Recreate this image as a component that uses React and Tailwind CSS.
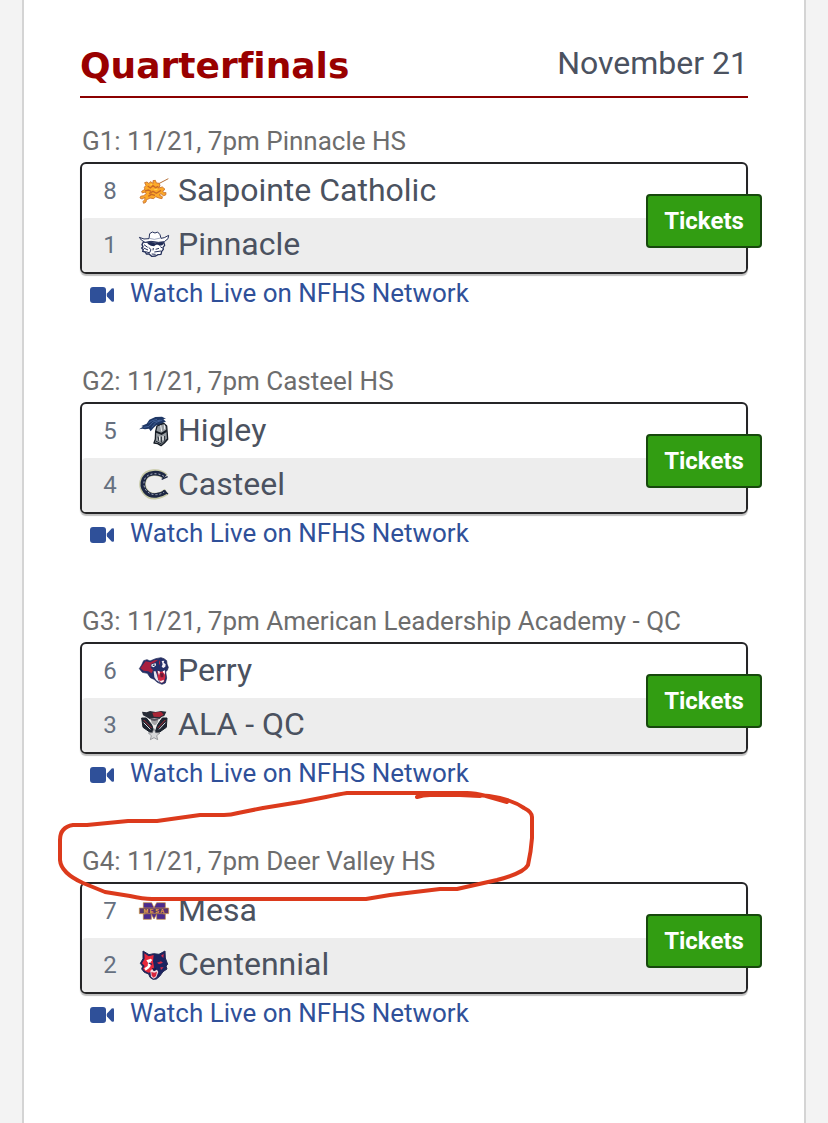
import React from "react";

const games = [
  {
    id: "G1",
    info: "11/21, 7pm Pinnacle HS",
    teams: [
      { seed: 8, name: "Salpointe Catholic", Logo: LancerLogo },
      { seed: 1, name: "Pinnacle", Logo: PioneerLogo },
    ],
  },
  {
    id: "G2",
    info: "11/21, 7pm Casteel HS",
    teams: [
      { seed: 5, name: "Higley", Logo: KnightLogo },
      { seed: 4, name: "Casteel", Logo: HorseshoeLogo },
    ],
  },
  {
    id: "G3",
    info: "11/21, 7pm American Leadership Academy - QC",
    teams: [
      { seed: 6, name: "Perry", Logo: PumaLogo },
      { seed: 3, name: "ALA - QC", Logo: PatriotLogo },
    ],
  },
  {
    id: "G4",
    info: "11/21, 7pm Deer Valley HS",
    circled: true,
    teams: [
      { seed: 7, name: "Mesa", Logo: MesaLogo },
      { seed: 2, name: "Centennial", Logo: CoyoteLogo },
    ],
  },
];

// All team logos share the same 96 unit canvas
function LogoFrame({ children }) {
  return (
    <svg viewBox="-3 -3 96 96" className="w-8 h-8 shrink-0" aria-hidden="true">
      {children}
    </svg>
  );
}

function LancerLogo() {
  return (
    <LogoFrame>
      <path d="M50 28L88 8" stroke="#b5713a" strokeWidth="3" />
      <path
        d="M21 28L17 20L24 18L30 23L34 17L43 22L42 14L49 13L52 21L61 22L63 30L57 36L70 33L78 40L71 45L74 50L81 50L80 57L73 59L66 53L60 57L70 62L69 68L60 66L50 62L44 68L33 66L26 70L22 71L21 78L14 82L12 77L17 71L18 64L9 69L3 66L5 61L14 59L22 53L18 48L10 51L8 46L18 40L16 34Z"
        fill="#fda928"
        stroke="#cf7a35"
        strokeWidth="3"
        strokeLinejoin="round"
      />
      <path d="M18 45L28 42L36 46M26 30L34 36L42 29L50 35L58 31M30 53L42 46L52 52L66 43M28 61L37 55L48 58" fill="none" stroke="#c96a25" strokeWidth="4" />
      <path d="M34 27L39 25M46 41L55 40" stroke="#ffd04a" strokeWidth="4" />
    </LogoFrame>
  );
}

function PioneerLogo() {
  return (
    <LogoFrame>
      <path d="M13 36L9 44L12 50L8 54L13 59L11 64L19 66L22 72L30 72L38 79L50 78L57 74L66 73L68 64L73 58L72 52L77 46L74 36Z" fill="#fff" stroke="#25305a" strokeWidth="4" strokeLinejoin="round" />
      <path d="M24 38L36 36L48 40L66 36L75 39L70 46L62 47L57 44L51 44L45 49L36 47L28 43Z" fill="#1f2b55" />
      <path d="M15 44L26 52M14 54L27 60M20 65L33 69M29 52L36 59L32 68M38 72L50 73M46 66L66 63M50 58L60 55M64 50L70 54M43 54L42 61" fill="none" stroke="#25305a" strokeWidth="3" />
      <path d="M1 22L15 27L30 26L32 11L40 6L48 9L56 6L63 14L66 25L76 23L89 16L87 26L76 35L58 37L36 34L18 37L7 30Z" fill="#fff" stroke="#25305a" strokeWidth="3" strokeLinejoin="round" />
      <path d="M31 25L46 28L65 24" fill="none" stroke="#7480a0" strokeWidth="2" />
    </LogoFrame>
  );
}

function KnightLogo() {
  return (
    <LogoFrame>
      <path d="M0 40l12-8-5-2 16-7 8-12 18-8 20-1 12 6-8 1 8 9-7 1-4 9-18 0-8 7-9 11-5-8-12 2-8-2z" fill="#1e3765" />
      <path d="M14 34l16-3 12-13 22-6M38 34l12-14 20-8M28 21l12-7 14-4" fill="none" stroke="#5576b0" strokeWidth="2" />
      <path d="M54 30L74 22L83 30L86 70L76 81L66 89L56 83L45 81L49 70L50 46Z" fill="#969ca1" stroke="#171d26" strokeWidth="4" strokeLinejoin="round" />
      <path d="M51 44L67 50L84 40L83 48L68 57L51 50Z" fill="#151b24" />
      <path d="M65 28L68 46M76 26L77 40" stroke="#edf0f2" strokeWidth="3" />
      <path d="M57 62L60 75M67 62V80M77 60V74M50 75L67 84L85 68" fill="none" stroke="#202833" strokeWidth="3" />
      <path d="M62 61V74M72 60V73" stroke="#fff" strokeWidth="3" />
    </LogoFrame>
  );
}

function HorseshoeLogo() {
  return (
    <LogoFrame>
      <path d="M79 20C60 2 24 4 14 26C2 56 26 82 52 78Q67 77 83 65" fill="none" stroke="#c6c8a4" strokeWidth="20" />
      <path d="M78 20C60 4 24 6 15 27C3 56 26 80 52 76Q67 75 82 65" fill="none" stroke="#1d2743" strokeWidth="14" />
      <path d="M75 19C58 7 26 8 17 27C8 54 26 75 52 74Q64 74 77 65" fill="none" stroke="#a8b0c0" strokeWidth="3" strokeDasharray="6 6" />
      <path d="M68 28l18-8M72 62l15 10" stroke="#1d2743" strokeWidth="4" />
    </LogoFrame>
  );
}

function PumaLogo() {
  return (
    <LogoFrame>
      <path
        d="M1 38L8 27L14 14L24 11L33 15L50 8L66 5L75 8L83 14L84 24L88 34L85 43L80 47L83 66L79 81L69 85L55 79L45 70L34 65L25 52L10 49Z"
        fill="#25306a"
        stroke="#1b2350"
        strokeWidth="2"
        strokeLinejoin="round"
      />
      <path d="M4 37L12 26L20 16L34 19L46 13L58 11L46 20L36 24L35 35L42 42L38 52L28 46L14 44Z" fill="#a8203f" />
      <path d="M38 25L50 22L51 28L44 34L37 31Z" fill="#fff" />
      <path d="M68 15L76 14L74 20L80 25L79 32L73 36L68 32L71 25Z" fill="#f3eef5" />
      <path d="M41 28L47 27" stroke="#1b2350" strokeWidth="4" />
      <path d="M60 12L64 20L60 28Z" fill="#c0213f" />
      <path d="M44 46L50 46L54 58L58 72L64 80L52 73L46 64Z" fill="#e9e4ee" />
      <path d="M55 45L66 47L78 44L79 64L75 78L66 80L57 70Z" fill="#cf2743" />
      <path d="M63 52H74L73 64H65Z" fill="#6d1735" />
      <path d="M56 44L63 47L60 58Z" fill="#fff" />
      <path d="M71 46L78 43L77 56Z" fill="#fff" />
      <path d="M60 71L65 75L75 71L73 78L66 80Z" fill="#fff" />
    </LogoFrame>
  );
}

function PatriotLogo() {
  return (
    <LogoFrame>
      <path d="M9 5l14 2 10-4 17 3 16-3 16 2-6 13-7 2-9 8H33l-12-8-9-4z" fill="#262b36" />
      <path d="M40 8L66 5L74 14L62 21L44 20Z" fill="#a92636" />
      <path d="M35 24H58L57 36L51 44L46 46L38 39Z" fill="#a5a5a8" />
      <path d="M35 23L46 27L58 23L56 31L46 33L36 31Z" fill="#5b5660" />
      <path d="M8 24L22 24L38 44L46 68L32 66L12 52ZM84 24L70 24L56 44L48 68L62 66L82 52Z" fill="#1e2531" stroke="#171e28" strokeWidth="3" />
      <path d="M14 38L34 58M79 38L60 58" stroke="#d8d8dc" strokeWidth="3" />
      <path d="M14 30L38 54M79 30L56 54" stroke="#a82b35" strokeWidth="3" />
      <path d="M45 56l5 12 13 1-10 8 3 12-11-6-11 6 3-12-9-8 12-1z" fill="#d6d7d9" stroke="#77797e" strokeWidth="2" />
    </LogoFrame>
  );
}

function MesaLogo() {
  return (
    <LogoFrame>
      <path d="M13 20h25l7 15 8-15h26v17h-6v17h6v16H53V55l-8 14-8-14v15H13V54h6V37h-6z" fill="#4b2b8f" stroke="#bf863c" strokeWidth="2" />
      <path d="M1 36h88v17H1z" fill="#57336f" stroke="#d39a3d" strokeWidth="2" />
      <text x="45" y="50" textAnchor="middle" fill="#f2aa3b" className="font-['Liberation_Sans'] font-bold text-[17px]">
        M E S A
      </text>
    </LogoFrame>
  );
}

function CoyoteLogo() {
  return (
    <LogoFrame>
      <path
        d="M12 3L30 14L44 11L60 13L78 3L79 24L86 43L81 48L84 57L72 65L62 79L52 87L42 88L33 82L29 72L16 67L8 57L11 49L4 40L12 26Z"
        fill="#1b2360"
        stroke="#222653"
        strokeWidth="3"
        strokeLinejoin="round"
      />
      <path d="M16 10L29 19L44 15L42 34L45 52L38 66L28 68L17 62L12 56L17 48L9 40L17 26Z" fill="#e8283b" />
      <path d="M22 31L35 26L40 30L34 37L35 48L30 55L20 62L16 55L26 48L27 38Z" fill="#fff" />
      <path d="M29 39L39 43" stroke="#1b2360" strokeWidth="4" />
      <path d="M66 17L74 11L73 24Z" fill="#d62c47" />
      <path d="M54 38L66 34L72 38L60 43Z" fill="#d62c47" />
      <path d="M64 52L74 52L66 60Z" fill="#d62c47" />
      <path d="M34 62L40 57L46 63L54 59L58 66L52 82L44 86L36 80Z" fill="#f2d9df" />
      <path d="M37 66L46 68L54 65L51 78L44 83L38 77Z" fill="#d8263e" />
      <path d="M38 54L46 56L52 53L49 61L44 63Z" fill="#141a44" />
    </LogoFrame>
  );
}

function CameraIcon() {
  return (
    <svg viewBox="0 0 24 16" className="w-6 h-4 mt-1" fill="currentColor" aria-hidden="true">
      <rect width="16" height="16" rx="3" />
      <path d="M17 6.5L21.7 1.6Q24 0.3 24 2.6V13.4Q24 15.7 21.7 14.4L17 9.5Q16.4 8 17 6.5z" />
    </svg>
  );
}

// Hand drawn marker loop round a game's heading
function MarkerCircle() {
  return (
    <svg
      viewBox="56 786 480 120"
      className="absolute -left-6 -top-15 w-[480px] h-[120px] pointer-events-none"
      fill="none"
      stroke="#dc3a1c"
      strokeWidth="4"
      strokeLinecap="round"
      strokeLinejoin="round"
      aria-hidden="true"
    >
      <path d="M507 802L486 796Q475 793 467 793H347Q340 794 326 797L300 802L263 808L238 813Q231 815 224 815H200L157 821H128L87 825H73Q60 827 60 840V860Q61 873 83 883L105 892L130 896Q143 899 152 899H366L390 895L440 889H457L497 880Q524 873 528 865Q531 852 532 838V817Q532 812 524 808Q511 799 489 796Q480 795 470 795H430Q423 795 417 797" />
      <path d="M440 794L480 796" />
    </svg>
  );
}

function Game({ game }) {
  return (
    <section className="relative">
      <h3 className="pl-0.5 mb-1.5 text-[26px] leading-[30px] text-[#6d6d6d]">
        {game.id}: {game.info}
      </h3>

      <div className="relative border-2 border-[#252527] rounded-md shadow-[0_2px_1px_rgba(0,0,0,0.25)]">
        {game.teams.map((team) => (
          <div key={team.seed} className="flex items-center h-[54px] rounded-sm even:bg-[#ededed]">
            <span className="w-14 text-center text-2xl text-[#667080]">{team.seed}</span>
            <team.Logo />
            <span className="ml-2 pb-0.5 text-[32px] leading-10 text-[#4b5260]">{team.name}</span>
          </div>
        ))}
        <button
          type="button"
          className="absolute -right-4 top-[30px] w-[116px] h-[54px] rounded-sm border-2 border-[#17480d] bg-[#329d12] text-2xl font-bold text-white cursor-pointer"
        >
          Tickets
        </button>
      </div>

      <a href="#watch" className="flex w-fit items-center gap-4 mt-1 pl-2.5 text-[26px] leading-[30px] text-[#2f5099]">
        <CameraIcon />
        Watch Live on NFHS Network
      </a>

      {game.circled && <MarkerCircle />}
    </section>
  );
}

export default function App() {
  return (
    <div className="min-h-screen bg-[#f3f3f3] px-[22px] font-[Roboto,sans-serif]">
      <main className="min-h-screen bg-white border-x-2 border-[#d4d4d4] px-14 pt-10 pb-16">
        <header className="flex items-start justify-between border-b-2 border-[#8b0000] pb-1">
          <h2 className="text-4xl leading-13 font-bold text-[#990000] font-['DejaVu_Sans',Verdana,sans-serif] [font-variant-ligatures:none]">
            Quarterfinals
          </h2>
          <span className="text-[32px] leading-[46px] text-[#4b5260]">November 21</span>
        </header>

        <div className="mt-7 flex flex-col gap-[58px]">
          {games.map((game) => (
            <Game key={game.id} game={game} />
          ))}
        </div>
      </main>
    </div>
  );
}
